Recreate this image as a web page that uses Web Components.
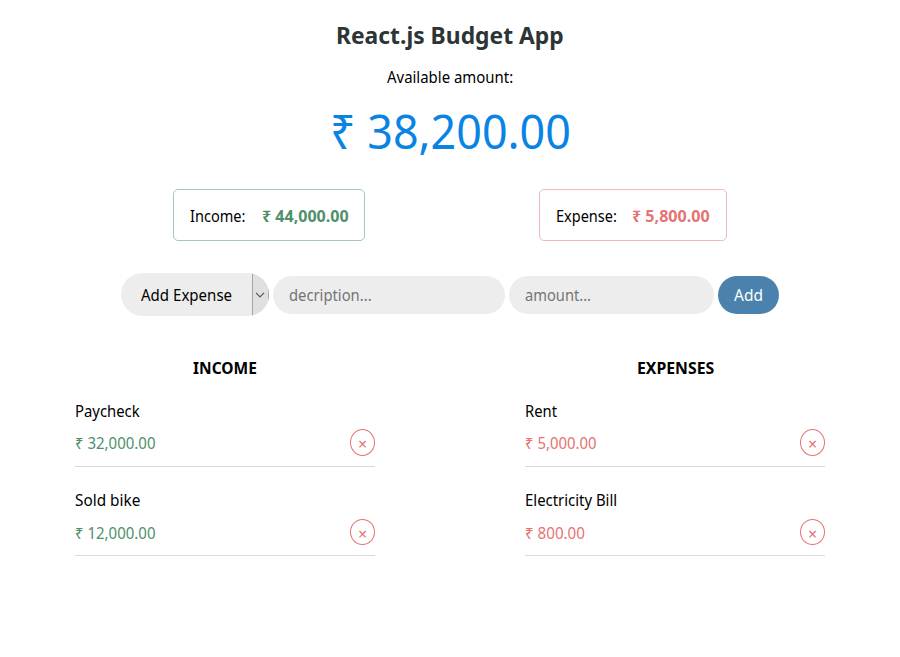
<!DOCTYPE html>
<html lang="en">
<head>
<meta charset="utf-8">
<title>Budget App</title>
<style>
html,body{margin:0;background:#fff}
body{font:16px/22px "Noto Sans","Open Sans",sans-serif;color:#000;--green:#4f8f6b;--red:#e57373}
</style>
</head>
<body>
<budget-app></budget-app>
<script>
const define=(name,html,init)=>customElements.define(name,class extends HTMLElement{
  connectedCallback(){
    if(this.shadowRoot)return;
    const t=document.createElement('template');
    t.innerHTML=html;
    this.attachShadow({mode:'open'}).append(t.content.cloneNode(true));
    if(init)init.call(this,this.shadowRoot);
  }
});

// A single line of text condensed to a given advance width.
define('text-run',`<style>:host{display:block;flex:none;white-space:nowrap}span{display:inline-block;transform-origin:0 50%}</style><span><slot></slot></span>`,function(r){
  const w=+this.getAttribute('w'),s=r.querySelector('span');
  this.style.width=w+'px';
  s.style.transform='scaleX('+w/s.offsetWidth+')';
});

define('total-box',`<style>:host{display:flex;gap:16px;align-items:center;box-sizing:border-box;height:52px;padding:2px 16px 0;border:1px solid #a7c7b5;border-radius:5px}
:host([kind=expense]){border-color:#f2b9b9}
::slotted([slot=value]){font-weight:700;color:var(--green)}
:host([kind=expense]) ::slotted([slot=value]){color:var(--red)}</style><slot></slot><slot name="value"></slot>`);

define('type-select',`<style>:host{display:flex;width:148px;height:43px;border-radius:21.5px;overflow:hidden;background:#ededed;align-items:center}
.label{flex:1;padding-left:20px}
.arrow{box-sizing:border-box;width:17px;height:43px;padding-right:2px;border-left:1px solid #a3a3a3;border-right:1px solid #a3a3a3;background:#e0e0e0;display:flex;align-items:center;justify-content:center}</style>
<div class="label"><slot></slot></div><div class="arrow"><svg width="10" height="6" viewBox="0 0 10 6" fill="none" stroke="#555" stroke-width="1.2"><path d="M1 .8l4 4 4-4"/></svg></div>`);

define('text-field',`<style>:host{display:flex;box-sizing:border-box;align-items:center;height:38px;padding:1px 16px 0;border-radius:19px;background:#ededed;color:#757575}</style><slot></slot>`);

define('add-button',`<style>:host{display:flex;box-sizing:border-box;align-items:center;width:61px;height:38px;padding:1px 16px 0;border-radius:19px;background:#4a82ad;color:#fff}</style><slot></slot>`);

define('entry-item',`<style>:host{display:block;height:56px;padding-bottom:10px;border-bottom:1px solid #dadada;color:#000}
.row{display:flex;justify-content:space-between;align-items:center;height:26px;margin-top:var(--row-gap,8px)}
.value{color:var(--green);padding-top:1px}
:host([kind=expense]) .value{color:var(--red)}
.remove{box-sizing:border-box;width:25px;height:var(--remove-height,26px);border:1px solid var(--red);border-radius:50%;color:var(--red);display:flex;align-items:center;justify-content:center;padding-top:3px;font-size:16px;line-height:20px}</style>
<slot></slot><div class="row"><div class="value"><slot name="value"></slot></div><div class="remove">×</div></div>`);

define('entry-list',`<style>:host{display:block;width:300px}.head{display:flex;justify-content:center;font-weight:700;margin-bottom:21px}
.items{display:grid;gap:22px}</style><div class="head"><slot name="head"></slot></div><div class="items"><slot></slot></div>`);

define('budget-app',`<style>
:host{display:flex;flex-direction:column;align-items:center;padding-top:19px}
h1{margin:0 0 15px;font-size:24px;line-height:32px;color:#2d3436}
.amount{margin-top:11px;font-size:48px;line-height:64px;color:#0984e3}
.totals{align-self:stretch;display:flex;justify-content:space-evenly;margin-top:26px}
.form{display:flex;align-items:center;gap:4px;margin-top:32px}
.description{width:232px}.sum{width:205px}
.lists{display:flex;gap:150px;margin-top:41px}
.first{--remove-height:27px;--row-gap:7px}
</style>
<h1><text-run w="227.4">React.js Budget App</text-run></h1>
<text-run w="126">Available amount:</text-run>
<text-run class="amount" w="241">₹ 38,200.00</text-run>
<div class="totals">
<total-box kind="income"><text-run w="55.5">Income:</text-run><text-run slot="value" w="86.2">₹ 44,000.00</text-run></total-box>
<total-box kind="expense"><text-run w="60.8">Expense:</text-run><text-run slot="value" w="77.3">₹ 5,800.00</text-run></total-box>
</div>
<div class="form">
<type-select><text-run w="91.2">Add Expense</text-run></type-select>
<text-field class="description"><text-run w="82.2">decription...</text-run></text-field>
<text-field class="sum"><text-run w="66">amount...</text-run></text-field>
<add-button><text-run w="29">Add</text-run></add-button>
</div>
<div class="lists">
<entry-list><text-run slot="head" w="64">INCOME</text-run>
<entry-item class="first" kind="income"><text-run w="65">Paycheck</text-run><text-run slot="value" w="80.5">₹ 32,000.00</text-run></entry-item>
<entry-item kind="income"><text-run w="65.2">Sold bike</text-run><text-run slot="value" w="80.5">₹ 12,000.00</text-run></entry-item></entry-list>
<entry-list><text-run slot="head" w="77">EXPENSES</text-run>
<entry-item class="first" kind="expense"><text-run w="32.3">Rent</text-run><text-run slot="value" w="71.7">₹ 5,000.00</text-run></entry-item>
<entry-item kind="expense"><text-run w="92.2">Electricity Bill</text-run><text-run slot="value" w="59.6">₹ 800.00</text-run></entry-item></entry-list>
</div>`);
</script>
</body>
</html>
